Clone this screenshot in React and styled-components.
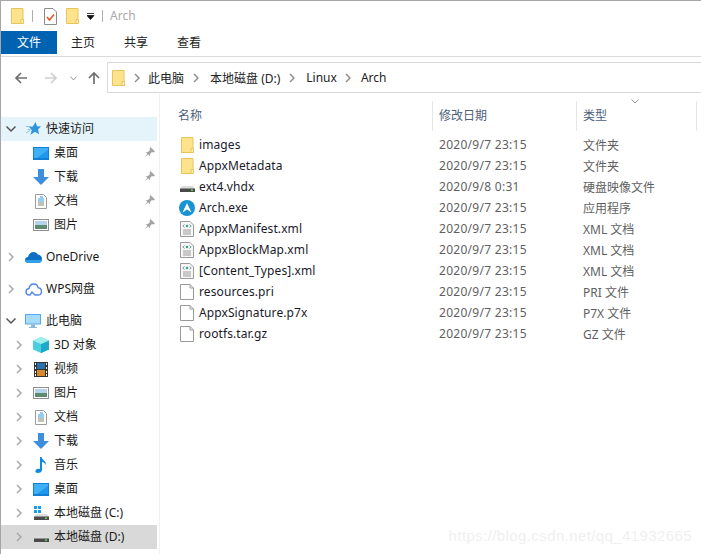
import React from 'react';
import styled, { createGlobalStyle } from 'styled-components';

const Global = createGlobalStyle`
  html, body { margin: 0; padding: 0; background: #fff; }
  * { box-sizing: border-box; }
`;
const Window = styled.div`
  position: relative; width: 701px; height: 554px; overflow: hidden; background: #fff;
  border-left: 1px solid #a6a6a6; border-top: 1px solid #a6a6a6;
  font-family: "Noto Sans", "Noto Sans CJK SC", sans-serif; font-size: 12px; color: #1a1a1a;
  display: flex; flex-direction: column;
`;
const TitleBar = styled.div`
  height: 30px; display: flex; align-items: center; padding-left: 10px;
`;
const TitleSep = styled.span`
  width: 1px; height: 12px; background: #b0b0b0; margin: ${p => p.$m};
`;
const TitleText = styled.span`color: #a9a9a9; font-size: 12px; margin-left: 7px; margin-bottom: 2px;`;
const Drop = styled.span`margin-left: 8px; display: flex;`;
const Gap = styled.span`width: ${p => p.$w}px; flex: none;`;
const Ribbon = styled.div`
  height: 26px; display: flex; border-bottom: 1px solid #dadada; align-items: flex-start;
`;
const RibbonTab = styled.div`
  height: 23px; line-height: 24px; text-align: center; width: ${p => p.$w}px;
  margin-right: ${p => p.$mr || 0}px;
  background: ${p => p.$active ? '#0063b1' : 'transparent'};
  color: ${p => p.$active ? '#fff' : '#222'};
`;
const NavRow = styled.div`
  height: 37px; display: flex; padding-top: 5px; border-bottom: 0;
`;
const NavButtons = styled.div`
  width: 106px; display: flex; align-items: center; padding: 1px 0 0 13px; height: 31px;
`;
const Address = styled.div`
  flex: 1; height: 31px; display: flex; align-items: center; padding-left: 4px;
  border: 1px solid #d9d9d9; border-right: 0; color: #222;
`;
const Crumb = styled.span`margin-left: ${p => p.$ml}px;`;
const Chev = styled.span`display: flex; margin-left: ${p => p.$ml}px;`;
const Body = styled.div`flex: 1; display: flex; min-height: 0;`;
const Side = styled.nav`
  width: 159px; flex: none; border-right: 1px solid #f0f0f0; padding-top: 23px;
`;
const SideInner = styled.div`width: 156px;`;
const NavItem = styled.div`
  height: 24px; display: flex; align-items: center; position: relative;
  margin-bottom: ${p => p.$mb || 0}px;
  background: ${p => p.$sel === 'blue' ? '#e5f3fb' : p.$sel === 'gray' ? '#d9d9d9' : 'transparent'};
`;
const Twist = styled.span`width: 16px; flex: none; display: flex; justify-content: center; margin-left: ${p => p.$sub ? 10 : 2}px;`;
const IconBox = styled.span`
  width: 18px; height: 18px; flex: none; display: flex; align-items: center; justify-content: center;
  margin-left: 5px;
`;
const Label = styled.span`margin: 0 0 2px 4px; white-space: nowrap;`;
const IndentSpacer = styled.span`width: 26px; flex: none;`;
const Pin = styled.span`position: absolute; right: 2px; top: 6px; display: flex;`;
const Main = styled.div`flex: 1; display: flex; flex-direction: column; padding-left: 11px;`;
const HeaderRow = styled.div`
  display: grid; grid-template-columns: 262px 144px 120px; height: 27px; margin-top: 7px; position: relative;
`;
const HeaderCell = styled.div`
  color: #4c607a; padding-left: ${p => p.$first ? 7 : 6}px; line-height: 30px;
  border-right: 1px solid #e5e5e5;
`;
const SortMark = styled.span`position: absolute; left: 460px; top: -2px; display: flex;`;
const List = styled.div`margin-top: 6px;`;
const FileRow = styled.div`
  display: grid; grid-template-columns: 262px 144px 120px; height: 21px; align-items: center;
`;
const NameCell = styled.div`display: flex; align-items: center; padding-left: 7px; color: #1a1a2a;`;
const FileIcon = styled.span`width: 18px; height: 18px; display: flex; align-items: center; justify-content: center; flex: none;`;
const FileName = styled.span`margin: 0 0 1px 3px; white-space: nowrap; letter-spacing: 0.1px;`;
const Meta = styled.div`
  color: #5f5f5f; padding-left: 6px; white-space: nowrap;
  letter-spacing: ${p => p.$date ? '0.28px' : '0'};
`;
const Watermark = styled.div`
  position: absolute; right: 9px; bottom: 10px; font-family: "Liberation Sans", sans-serif;
  font-size: 15px; color: #efefef; letter-spacing: 0.4px;
`;

const Folder = () => (
  <svg width="13" height="16" viewBox="0 0 13 16">
    <path d="M.5.5h11.500v15H.5z" fill="#fde38c" stroke="#e8c45c" />
    <path d="M10 11.500h2.500v4H10z" fill="#fff3c4" stroke="#e8c45c" />
  </svg>
);
const CheckDoc = () => (
  <svg width="13" height="17" viewBox="0 0 13 17">
    <path d="M.5.500h8.500l3.500 3.500v12.500H.5z" fill="#fff" stroke="#8c8c8c" />
    <path d="M3 9l2.500 3L10 6.500" fill="none" stroke="#e4572b" strokeWidth="1.600" />
  </svg>
);
const Chevron = ({ c = '#a6a6a6' }) => (
  <svg width="8" height="10" viewBox="0 0 8 10"><path d="M2 1l4 4-4 4" fill="none" stroke={c} strokeWidth="1.400" /></svg>
);
const Down = () => (
  <svg width="12" height="8" viewBox="0 0 12 8"><path d="M1.500 1.500L6 6l4.500-4.500" fill="none" stroke="#555" strokeWidth="1.500" /></svg>
);
const Arrow = ({ dir, c }) => {
  const rot = { left: 0, right: 180, up: 90 }[dir];
  return (
    <svg width="14" height="14" viewBox="0 0 14 14" style={{ transform: `rotate(${rot}deg)` }}>
      <path d="M13 7H2M7 2L2 7l5 5" fill="none" stroke={c} strokeWidth="1.700" />
    </svg>
  );
};
const Desktop = () => (
  <svg width="16" height="13" viewBox="0 0 16 13">
    <rect width="16" height="13" fill="#0f7fd8" /><rect x="1" y="1" width="14" height="10" fill="#3fb0f5" />
    <path d="M4 11L15 3v8z" fill="#1f97ea" />
  </svg>
);
const DownArrow = () => (
  <svg width="16" height="16" viewBox="0 0 16 16"><path d="M5 0h6v8h5l-8 8-8-8h5z" fill="#3b8fdc" /></svg>
);
const DocIcon = () => (
  <svg width="12" height="15" viewBox="0 0 12 15">
    <path d="M.5.500h8l3 3v11H.5z" fill="#fff" stroke="#9a9a9a" />
    <path d="M5 3h3M3 5h6M3 7h6" stroke="#2d9ae0" /><path d="M3 9h6M3 11h6" stroke="#7c8a6a" />
  </svg>
);
const PicIcon = () => (
  <svg width="16" height="12" viewBox="0 0 16 12">
    <rect x=".5" y=".5" width="15" height="11" fill="#fff" stroke="#8f8f8f" />
    <rect x="2" y="2" width="12" height="4" fill="#b5d3ec" /><rect x="2" y="6" width="12" height="4" fill="#5f8a70" />
  </svg>
);
const PinIcon = () => (
  <svg width="11" height="11" viewBox="0 0 11 11"><path d="M6.500 0L11 4.500 9.500 5.500 8 5 6 7l-.3 2.200L1.800 5.300 4 5l2-2-.4-1.500zM3.300 7L.5 10.500 4 7.700z" fill="#a3a3a3" /></svg>
);
const Star = () => (
  <svg width="15" height="14" viewBox="0 0 15 14">
    <path d="M9.500 0l1.500 4.300 4 .2-3 3 1 4.700-4-2.500-4.500 3 1.300-4.800L3 5l3.800-.5z" fill="#2f94e0" />
    <path d="M0 4.500h5M1.500 7.500h3M0 11l4-2.500" stroke="#8cc4ef" strokeWidth="1" />
  </svg>
);
const Cloud = () => (
  <svg width="17" height="11" viewBox="0 0 17 11">
    <path d="M3.500 11C1.500 11 0 9.700 0 8c0-1.600 1.200-2.900 3-3C3.800 2 6 0 8.500 0c2 0 3.700 1 4.500 2.800 2.300 0 4 1.700 4 4 0 2.400-1.700 4.200-4 4.200z" fill="#0f6fc4" />
    <path d="M3.500 11C1.500 11 0 9.700 0 8h17c0 1.800-1.700 3-4 3z" fill="#2fa3e8" />
  </svg>
);
const WpsCloud = () => (
  <svg width="17" height="13" viewBox="0 0 17 13"><path d="M4.500 12C2.500 12 1 10.500 1 8.700 1 7 2.300 5.700 4 5.500 4.500 3 6.300 1 8.700 1c2.300 0 4 1.700 4.400 3.700 2 .2 3.400 1.800 3.400 3.700 0 2-1.500 3.600-3.500 3.600H10L7 9l-2 3z" fill="#fff" stroke="#4f86ee" strokeWidth="1.400" /></svg>
);
const Monitor = () => (
  <svg width="16" height="14" viewBox="0 0 16 14">
    <rect width="16" height="10.500" fill="#5aa9e6" /><rect x="1" y="1" width="14" height="8.500" fill="#a5dcfb" />
    <path d="M6 10.500h4V13H6zM4 13h8v1H4z" fill="#88b8d8" />
  </svg>
);
const Cube = () => (
  <svg width="16" height="16" viewBox="0 0 16 16">
    <path d="M8 0l8 3.500v9L8 16 0 12.500v-9z" fill="#49cfe0" /><path d="M8 7v9l8-3.500v-9z" fill="#1fa9c8" /><path d="M8 0l8 3.500L8 7 0 3.500z" fill="#9fefef" />
  </svg>
);
const Film = () => (
  <svg width="14" height="15" viewBox="0 0 14 15">
    <rect width="14" height="15" fill="#333" />
    <rect x="3" y="1" width="8" height="6" fill="#2a6fb0" /><rect x="3" y="8" width="8" height="6" fill="#d98a2b" />
    <path d="M1 1h1v2H1zM1 5h1v2H1zM1 9h1v2H1zM1 12h1v2H1zM12 1h1v2h-1zM12 5h1v2h-1zM12 9h1v2h-1zM12 12h1v2h-1z" fill="#fff" />
  </svg>
);
const Music = () => (
  <svg width="12" height="16" viewBox="0 0 12 16"><path d="M5 0h1.500c.5 3 5 4 4.500 8-1-2-3-3-4-3v8c0 2-2 3-4 3s-3-1-2.500-2.300C1 12 3.500 11.500 5 12z" fill="#1289e0" /></svg>
);
const Drive = ({ win }) => (
  <svg width="15" height={win ? 14 : 10} viewBox={win ? '0 0 15 14' : '0 4 15 10'}>
    {win && <path d="M0 0h3v3H0zM4 0h3v3H4zM0 4h3v3H0zM4 4h3v3H4z" fill="#14a0e8" />}
    <path d="M2 8h11l2 3H0z" fill="#dcdcdc" /><rect y="10.500" width="15" height="3.500" fill="#4a4a4a" />
    <rect x="11" y="11.500" width="2" height="1.500" fill="#5fd35f" />
  </svg>
);
const ArchLogo = () => (
  <svg width="16" height="16" viewBox="0 0 16 16">
    <circle cx="8" cy="8" r="8" fill="#1793d1" /><path d="M8 3L3.500 12.500 8 9.500l4.500 3z" fill="#fff" />
  </svg>
);
const Xml = () => (
  <svg width="14" height="16" viewBox="0 0 14 16">
    <path d="M.5.500h9.500l3.500 3.500v11.500H.5z" fill="#f7f7f7" stroke="#9a9a9a" />
    <path d="M4.500 3.500L2.800 5l1.700 1.500M9.500 3.500L11.200 5 9.500 6.500" fill="none" stroke="#7a9a9a" />
    <circle cx="7" cy="5" r="1.300" fill="#2fa58a" /><path d="M3 9h8M3 11h8M3 13h8" stroke="#9a9a9a" />
  </svg>
);
const Blank = () => (
  <svg width="14" height="16" viewBox="0 0 14 16"><path d="M.5.500h9.500l3.500 3.500v11.500H.5zM10 .500V4h3.500" fill="#fff" stroke="#9a9a9a" /></svg>
);

const files = [
  ['images', <Folder />, '2020/9/7 23:15', '文件夹'],
  ['AppxMetadata', <Folder />, '2020/9/7 23:15', '文件夹'],
  ['ext4.vhdx', <Drive />, '2020/9/8 0:31', '硬盘映像文件'],
  ['Arch.exe', <ArchLogo />, '2020/9/7 23:15', '应用程序'],
  ['AppxManifest.xml', <Xml />, '2020/9/7 23:15', 'XML 文档'],
  ['AppxBlockMap.xml', <Xml />, '2020/9/7 23:15', 'XML 文档'],
  ['[Content_Types].xml', <Xml />, '2020/9/7 23:15', 'XML 文档'],
  ['resources.pri', <Blank />, '2020/9/7 23:15', 'PRI 文件'],
  ['AppxSignature.p7x', <Blank />, '2020/9/7 23:15', 'P7X 文件'],
  ['rootfs.tar.gz', <Blank />, '2020/9/7 23:15', 'GZ 文件'],
];
const quick = [['桌面', <Desktop />], ['下载', <DownArrow />], ['文档', <DocIcon />], ['图片', <PicIcon />]];
const pc = [
  ['3D 对象', <Cube />], ['视频', <Film />], ['图片', <PicIcon />], ['文档', <DocIcon />], ['下载', <DownArrow />],
  ['音乐', <Music />], ['桌面', <Desktop />], ['本地磁盘 (C:)', <Drive win />], ['本地磁盘 (D:)', <Drive />],
];

export default function App() {
  return (
    <Window>
      <Global />
      <TitleBar>
        <Folder /><TitleSep $m="0 11px 0 8px" /><CheckDoc /><Gap $w={9} /><Folder />
        <Drop><svg width="8" height="7" viewBox="0 0 8 7"><path d="M0 .5h7M0 2.500h7L3.500 6.500z" stroke="#111" strokeWidth=".8" fill="#111" /></svg></Drop>
        <TitleSep $m="0 0 0 7px" /><TitleText>Arch</TitleText>
      </TitleBar>
      <Ribbon>
        <RibbonTab $active $w={56} $mr={12}>文件</RibbonTab>
        <RibbonTab $w={28} $mr={25}>主页</RibbonTab>
        <RibbonTab $w={28} $mr={25}>共享</RibbonTab>
        <RibbonTab $w={28}>查看</RibbonTab>
      </Ribbon>
      <NavRow>
        <NavButtons>
          <Arrow dir="left" c="#6f6f6f" /><Gap $w={16} /><Arrow dir="right" c="#cfcfcf" /><Gap $w={12} />
          <svg width="7" height="5" viewBox="0 0 7 5"><path d="M.5.500L3.500 4l3-3.500" fill="none" stroke="#9a9a9a" /></svg>
          <Gap $w={10} /><Arrow dir="up" c="#6f6f6f" />
        </NavButtons>
        <Address>
          <Folder />
          <Chev $ml={8}><Chevron c="#8a8a8a" /></Chev><Crumb $ml={7}>此电脑</Crumb>
          <Chev $ml={8}><Chevron c="#8a8a8a" /></Chev><Crumb $ml={10}>本地磁盘 (D:)</Crumb>
          <Chev $ml={8}><Chevron c="#8a8a8a" /></Chev><Crumb $ml={10}>Linux</Crumb>
          <Chev $ml={7}><Chevron c="#8a8a8a" /></Chev><Crumb $ml={9}>Arch</Crumb>
        </Address>
      </NavRow>
      <Body>
        <Side>
          <SideInner>
            <NavItem $sel="blue">
              <Twist><Down /></Twist><IconBox><Star /></IconBox><Label>快速访问</Label>
            </NavItem>
            {quick.map(([t, i], n) => (
              <NavItem key={t} $mb={n === 3 ? 8 : 0}>
                <IndentSpacer /><IconBox>{i}</IconBox><Label>{t}</Label>
                <Pin><PinIcon /></Pin>
              </NavItem>
            ))}
            <NavItem $mb={8}><Twist><Chevron /></Twist><IconBox><Cloud /></IconBox><Label>OneDrive</Label></NavItem>
            <NavItem $mb={8}><Twist><Chevron /></Twist><IconBox><WpsCloud /></IconBox><Label>WPS网盘</Label></NavItem>
            <NavItem><Twist><Down /></Twist><IconBox><Monitor /></IconBox><Label>此电脑</Label></NavItem>
            {pc.map(([t, i], n) => (
              <NavItem key={t} $sel={n === 8 ? 'gray' : undefined}>
                <Twist $sub><Chevron /></Twist><IconBox>{i}</IconBox><Label>{t}</Label>
              </NavItem>
            ))}
          </SideInner>
        </Side>
        <Main>
          <HeaderRow>
            <HeaderCell $first>名称</HeaderCell><HeaderCell>修改日期</HeaderCell><HeaderCell>类型</HeaderCell>
            <SortMark><svg width="8" height="5" viewBox="0 0 8 5"><path d="M.5.500L4 4 7.500.500" fill="none" stroke="#999" /></svg></SortMark>
          </HeaderRow>
          <List>
            {files.map(([n, i, d, t]) => (
              <FileRow key={n}>
                <NameCell><FileIcon>{i}</FileIcon><FileName>{n}</FileName></NameCell>
                <Meta $date>{d}</Meta><Meta>{t}</Meta>
              </FileRow>
            ))}
          </List>
        </Main>
      </Body>
      <Watermark>https://blog.csdn.net/qq_41932665</Watermark>
    </Window>
  );
}
